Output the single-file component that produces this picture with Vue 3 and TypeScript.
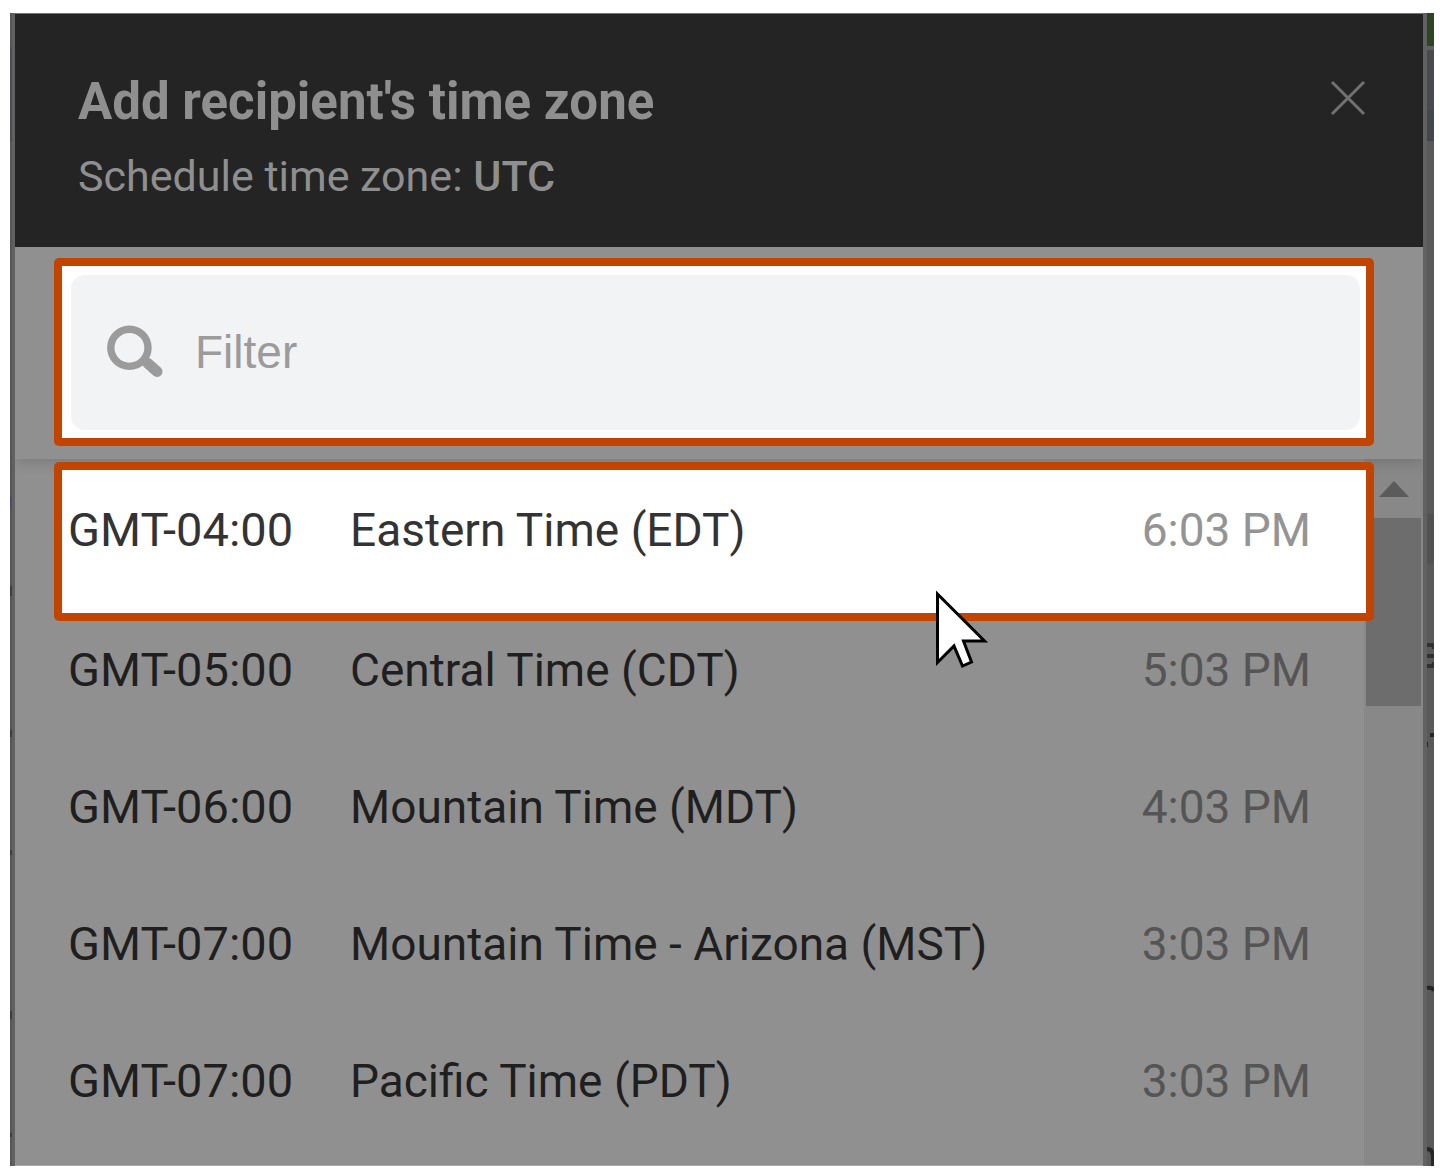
<script setup lang="ts">
import { ref } from 'vue'

interface Zone {
  offset: string
  name: string
  time: string
}

const zones: Zone[] = [
  { offset: 'GMT-04:00', name: 'Eastern Time (EDT)', time: '6:03 PM' },
  { offset: 'GMT-05:00', name: 'Central Time (CDT)', time: '5:03 PM' },
  { offset: 'GMT-06:00', name: 'Mountain Time (MDT)', time: '4:03 PM' },
  { offset: 'GMT-07:00', name: 'Mountain Time - Arizona (MST)', time: '3:03 PM' },
  { offset: 'GMT-07:00', name: 'Pacific Time (PDT)', time: '3:03 PM' },
]

const filter = ref('')
const selected = ref(0)
</script>

<template>
  <div class="page">
    <div class="frame">
      <svg class="edge edge-left" aria-hidden="true">
        <rect x="0" y="0" width="2" height="1153" fill="#555657" />
        <rect x="0" y="34" width="2" height="94" fill="#4a4d51" />
        <rect x="0" y="484" width="2" height="11" fill="#4a4b6e" />
        <rect x="0" y="573" width="2" height="10" fill="#3d3d3d" />
        <rect x="0" y="717" width="2" height="7" fill="#3d3d3d" />
        <rect x="0" y="837" width="2" height="5" fill="#3d3d3d" />
        <rect x="0" y="998" width="2" height="8" fill="#3d3d3d" />
        <rect x="0" y="1120" width="2" height="4" fill="#3d3d3d" />
      </svg>

      <section class="dialog" role="dialog" aria-labelledby="dialog-title">
        <header class="head">
          <div>
            <h1 id="dialog-title">Add recipient's time zone</h1>
            <p>Schedule time zone: <strong>UTC</strong></p>
          </div>
          <button class="close" type="button" aria-label="Close">
            <svg width="36" height="36" viewBox="0 0 36 36" aria-hidden="true">
              <path d="M2 2L34 34M34 2L2 34" fill="none" stroke="#717171" stroke-width="3" />
            </svg>
          </button>
        </header>

        <div class="search">
          <div class="callout">
            <label class="field">
              <svg width="58" height="54" viewBox="0 0 58 54" aria-hidden="true">
                <circle cx="23.4" cy="22.8" r="18.6" fill="none" stroke="#9b9b9b" stroke-width="7.4" />
                <path d="M42 38.5L51 46.5" stroke="#9b9b9b" stroke-width="11" stroke-linecap="round" />
              </svg>
              <input v-model="filter" type="text" placeholder="Filter" aria-label="Filter" />
            </label>
          </div>
        </div>

        <div class="results">
          <ul class="list">
            <li v-for="(zone, i) in zones" :key="zone.name" :class="{ active: i === selected }">
              <button class="row" type="button" @click="selected = i">
                <span class="offset">{{ zone.offset }}</span>
                <span class="name">{{ zone.name }}</span>
                <span class="time">{{ zone.time }}</span>
              </button>
              <svg v-if="i === selected" class="pointer" width="64" height="84" viewBox="0 0 64 84" aria-hidden="true">
                <path d="M7.5 4L54.5 51H33.5L41.5 72L32.5 76L24 56L7.5 72.5Z" fill="#fff" stroke="#000" stroke-width="3" />
              </svg>
            </li>
          </ul>
          <div class="scrollbar" aria-hidden="true">
            <svg width="30" height="16" viewBox="0 0 30 16"><path d="M0 16L15 0L30 16Z" fill="#5b5b5b" /></svg>
            <div class="thumb"></div>
          </div>
        </div>
      </section>

      <svg class="edge edge-right" aria-hidden="true">
        <rect x="4" y="0" width="7" height="1153" fill="#595959" />
        <rect x="4" y="0" width="7" height="33" fill="#2d4522" />
        <rect x="4" y="33" width="7" height="4" fill="#5f6060" />
        <rect x="4" y="37" width="7" height="60" fill="#494a4d" />
        <rect x="4" y="97" width="7" height="31" fill="#43474b" />
        <rect x="4" y="501" width="7" height="50" fill="#525252" />
        <path d="M4 632H9Q11 632 11 636M4 643H11M4 653H9Q11 653 11 649" fill="none" stroke="#303030" stroke-width="4" />
        <path d="M7 720H11V724H7ZM4 729H5V734H4Z" fill="#262626" />
        <path d="M4 975Q10 974 11 978M4 1136Q10 1136 10 1144V1153" fill="none" stroke="#262626" stroke-width="4" />
      </svg>
    </div>
  </div>
</template>

<style>
body {
  margin: 0;
  background: #fff;
}
</style>

<style scoped>
.page {
  box-sizing: border-box;
  height: 100vh;
  padding: 13px 6px 7px 10px;
  font-family: Roboto, "Liberation Sans", sans-serif;
}

.frame {
  display: flex;
  height: 100%;
  overflow: hidden;
  background: #616161;
}

.edge {
  flex: none;
  height: 100%;
}

.edge-left {
  width: 5px;
}

.edge-right {
  width: 11px;
}

.dialog {
  display: flex;
  flex: 1;
  flex-direction: column;
  min-width: 0;
  box-sizing: border-box;
  border-top: 1px solid #777;
  border-bottom: 1px solid #aaa;
  background: #909090;
}

.head {
  display: flex;
  align-items: flex-start;
  justify-content: space-between;
  flex: none;
  box-sizing: border-box;
  height: 233px;
  padding: 58px 57px 0 63px;
  background: #242424;
  color: #8f8f8f;
}

h1 {
  margin: 0;
  font-size: 51px;
  font-weight: 700;
  line-height: 60px;
}

.head p {
  margin: 16px 0 0;
  font-size: 43px;
  line-height: 56px;
}

.head strong {
  font-weight: 500;
}

.close {
  display: flex;
  margin-top: 8px;
  padding: 0;
  border: 0;
  background: none;
}

.search {
  position: relative;
  flex: none;
  padding: 11px 49px 13px 39px;
  background: #909090;
  box-shadow: 0 2px 14px rgba(0, 0, 0, 0.18);
  clip-path: inset(0 0 -20px 0);
}

.callout {
  padding: 9px 6px 8px 9px;
  border: 8px solid #c14400;
  border-radius: 5px;
  background: #fff;
}

.field {
  display: flex;
  align-items: center;
  gap: 31px;
  box-sizing: border-box;
  height: 155px;
  padding: 0 35px 2px;
  border-radius: 14px;
  background: #f1f3f5;
}

.field input {
  flex: 1;
  min-width: 0;
  padding: 0;
  border: 0;
  outline: 0;
  background: none;
  color: #333;
  font-family: "Liberation Sans", sans-serif;
  font-size: 46px;
  line-height: 56px;
}

.field input::placeholder {
  color: #9b9b9b;
  opacity: 1;
}

.results {
  display: flex;
  flex: 1;
  min-height: 0;
  overflow: hidden;
}

.list {
  flex: 1;
  min-width: 0;
  margin: 0;
  padding: 3px 0 0;
  list-style: none;
}

.row {
  display: flex;
  align-items: flex-start;
  box-sizing: border-box;
  width: 100%;
  height: 137px;
  padding: 21px 53px 0 53px;
  border: 0;
  background: none;
  color: #1f1f1f;
  font-family: inherit;
  font-size: 46px;
  line-height: 56px;
  text-align: left;
  white-space: nowrap;
}

.offset {
  width: 282px;
  font-size: 47px;
}

.name {
  flex: 1;
}

.time {
  color: #555;
}

.active {
  position: relative;
  z-index: 1;
  margin: 0 -10px 0 39px;
  border: 8px solid #c14400;
  border-radius: 5px;
  background: #fff;
}

.active .row {
  height: 143px;
  padding: 32px 55px 0 6px;
  color: #333;
}

.active .time {
  color: #949494;
}

.pointer {
  position: absolute;
  top: 120px;
  left: 868px;
}

.scrollbar {
  display: flex;
  flex: none;
  flex-direction: column;
  align-items: center;
  width: 55px;
  padding: 22px 2px 0;
  background: #888;
}

.thumb {
  width: 100%;
  height: 188px;
  margin-top: 21px;
  background: #6d6d6d;
}
</style>
